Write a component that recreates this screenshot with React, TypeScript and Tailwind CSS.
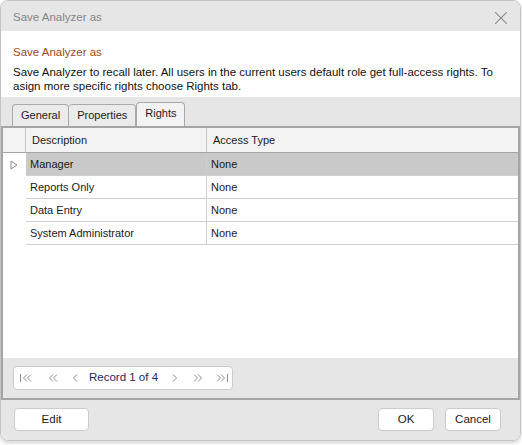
import { X } from 'lucide-react'

const rows = [
  { name: 'Manager', access: 'None' },
  { name: 'Reports Only', access: 'None' },
  { name: 'Data Entry', access: 'None' },
  { name: 'System Administrator', access: 'None' },
]

function Chev({ dir, double, bar }: { dir: 'l' | 'r'; double?: boolean; bar?: boolean }) {
  // small thin chevrons for the record navigator
  const left = dir === 'l'
  return (
    <svg width="14" height="10" viewBox="0 0 14 10" fill="none" stroke="#8a8a8a" strokeWidth="1">
      {left ? (
        <>
          {bar && <line x1="1.5" y1="1" x2="1.5" y2="9" />}
          <polyline points="8,1.5 4.5,5 8,8.5" />
          {double && <polyline points="12,1.5 8.5,5 12,8.5" />}
        </>
      ) : (
        <>
          <polyline points={double ? '2,1.5 5.5,5 2,8.5' : '5,1.5 8.5,5 5,8.5'} />
          {double && <polyline points="6,1.5 9.5,5 6,8.5" />}
          {bar && <line x1="12.5" y1="1" x2="12.5" y2="9" />}
        </>
      )}
    </svg>
  )
}

export default function App() {
  return (
    <div className="w-[522px] h-[445px] bg-white" style={{ fontFamily: '"Liberation Sans", Arial, sans-serif' }}>
      <div className="w-[521px] h-[441px] flex flex-col rounded-[8px] border border-[#c4c4c4] overflow-hidden shadow-[0_2px_4px_rgba(0,0,0,0.18)] text-[11px] text-[#1a1a1a]">
        {/* title bar */}
        <div className="h-[30px] shrink-0 bg-[#e6e6e6] flex items-center justify-between pl-[12px] pr-[8px] pt-[4px]">
          <span className="text-[#858585] text-[11.5px]">Save Analyzer as</span>
          <X size={22} strokeWidth={1.1} className="text-[#7a7a7a]" />
        </div>

        {/* header */}
        <div className="h-[66px] shrink-0 bg-white px-[12px] pt-[15px]">
          <div className="text-[#9a4a1e] text-[11.5px] leading-[13px]">Save Analyzer as</div>
          <p className="mt-[6px] leading-[14px] text-[11.5px] text-[#111]">
            Save Analyzer to recall later. All users in the current users default role get full-access rights. To asign more specific rights choose Rights tab.
          </p>
        </div>

        {/* body */}
        <div className="flex-1 bg-[#e6e6e6] flex flex-col">
          <div className="h-[29px] shrink-0 flex items-end pl-[11px]">
            <div className="h-[22px] px-[8px] flex items-center border border-b-0 border-[#a9a9a9] rounded-t-[4px] bg-[#ebebeb]">General</div>
            <div className="h-[22px] px-[8px] flex items-center border border-b-0 border-l-0 border-[#a9a9a9] rounded-t-[4px] bg-[#ebebeb]">Properties</div>
            <div className="h-[24px] px-[8px] flex items-center border border-b-0 border-[#a9a9a9] rounded-t-[4px] bg-[#f3f3f3] pb-[3px]">Rights</div>
          </div>

          <div className="h-[274px] shrink-0 border-2 border-l-[3px] border-[#a5a5a5] -ml-px flex flex-col">
            <div className="flex-1 bg-white flex flex-col">
              {/* header row */}
              <div className="h-[25px] flex bg-[#f3f3f3] border-b border-[#a5a5a5]">
                <div className="w-[23px] border-r border-[#c8c8c8]" />
                <div className="w-[181px] border-r border-[#c8c8c8] flex items-center pl-[6px]">Description</div>
                <div className="flex-1 flex items-center pl-[6px]">Access Type</div>
              </div>
              {rows.map((r, i) => (
                <div key={r.name} className="h-[23px] flex">
                  <div className="w-[23px] flex items-center pl-[7px]">
                    {i === 0 && (
                      <svg width="8" height="10" viewBox="0 0 8 10">
                        <polygon points="1,1 7,5 1,9" fill="none" stroke="#8c8c8c" strokeWidth="1" />
                      </svg>
                    )}
                  </div>
                  <div className={`flex-1 flex border-b border-[#cfcfcf] ${i === 0 ? 'bg-[#c9c9c9]' : ''}`}>
                    <div className="w-[181px] border-r border-[#cfcfcf] flex items-center pl-[4px]">{r.name}</div>
                    <div className="flex-1 flex items-center pl-[4px]">{r.access}</div>
                  </div>
                </div>
              ))}
            </div>

            {/* navigator */}
            <div className="h-[40px] shrink-0 bg-[#e6e6e6] flex items-center pl-[10px]">
              <div className="h-[24px] w-[220px] bg-white border border-[#cbcbcb] rounded-[4px] flex items-center pl-[5px] whitespace-nowrap">
                <Chev dir="l" double bar />
                <span className="ml-[12px]"><Chev dir="l" double /></span>
                <span className="ml-[10px]"><Chev dir="l" /></span>
                <span className="ml-[6px] text-[#1d2a55] text-[11.5px]">Record 1 of 4</span>
                <span className="ml-[10px]"><Chev dir="r" /></span>
                <span className="ml-[10px]"><Chev dir="r" double /></span>
                <span className="ml-[9px]"><Chev dir="r" double bar /></span>
              </div>
            </div>
          </div>

          {/* footer */}
          <div className="flex-1 flex items-center justify-between pl-[13px] pr-[19px] pb-[1px]">
            <button className="w-[75px] h-[23px] bg-white border border-[#cbcbcb] rounded-[4px] text-[11.5px]">Edit</button>
            <div className="flex gap-[11px]">
              <button className="w-[56px] h-[23px] bg-white border border-[#cbcbcb] rounded-[4px] text-[11.5px]">OK</button>
              <button className="w-[56px] h-[23px] bg-white border border-[#cbcbcb] rounded-[4px] text-[11.5px]">Cancel</button>
            </div>
          </div>
        </div>
      </div>
    </div>
  )
}
